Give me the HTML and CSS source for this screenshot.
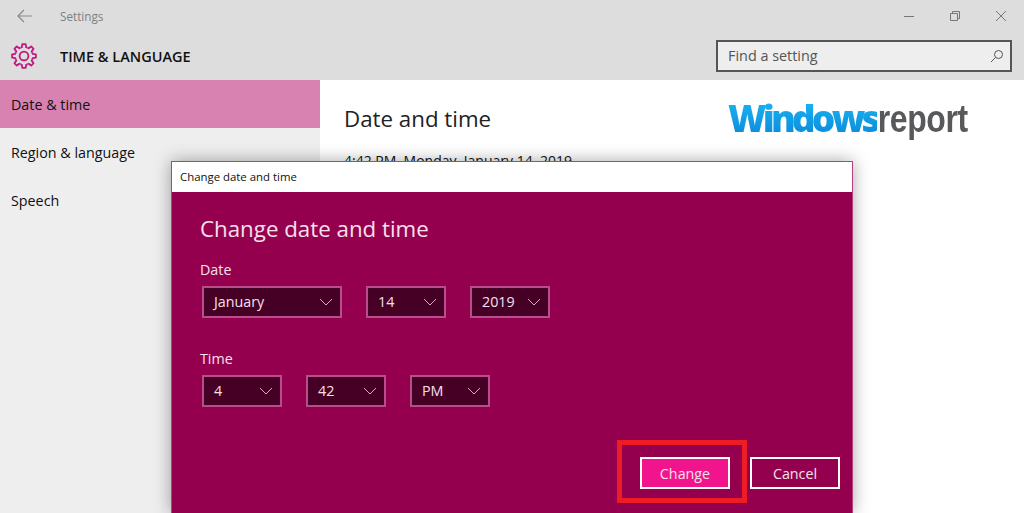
FILE: index.html
```html
<!DOCTYPE html>
<html lang="en">
<head>
<meta charset="utf-8">
<title>Settings</title>
<link rel="stylesheet" href="styles.css">
</head>
<body>
<div class="window">
  <header class="header">
    <div class="titlebar">
      <svg class="back" width="16" height="14" viewBox="0 0 16 14"><path d="M7 1 1 7l6 6M1 7h14" fill="none" stroke="#8a8a8a" stroke-width="1.2"/></svg>
      <span class="app-name">Settings</span>
      <div class="controls">
        <svg width="12" height="12" viewBox="0 0 12 12"><path d="M1 6.500h10" stroke="#777" fill="none"/></svg>
        <svg width="12" height="12" viewBox="0 0 12 12"><path d="M1.500 3.500h7v7h-7zM3.500 3.500v-2h7v7h-2" stroke="#777" fill="none"/></svg>
        <svg width="12" height="12" viewBox="0 0 12 12"><path d="M1 1l10 10M11 1 1 11" stroke="#777" fill="none"/></svg>
      </div>
    </div>
    <div class="pagebar">
      <svg class="gear" width="26" height="26" viewBox="-13 -13 26 26">
        <defs><path id="tooth" d="M-3.440-8.310-2.180-8.730-1.670-11.880 1.670-11.880 2.180-8.730 3.440-8.310"/></defs>
        <g fill="none" stroke="#c2177f" stroke-width="1.800" stroke-linejoin="round">
          <circle r="4.400"/>
          <use href="#tooth"/>
          <use href="#tooth" transform="rotate(45)"/>
          <use href="#tooth" transform="rotate(90)"/>
          <use href="#tooth" transform="rotate(135)"/>
          <use href="#tooth" transform="rotate(180)"/>
          <use href="#tooth" transform="rotate(225)"/>
          <use href="#tooth" transform="rotate(270)"/>
          <use href="#tooth" transform="rotate(315)"/>
        </g>
      </svg>
      <span class="page-title">TIME &amp; LANGUAGE</span>
      <div class="search">
        <span>Find a setting</span>
        <svg width="14" height="14" viewBox="0 0 14 14"><circle cx="8.500" cy="5.500" r="4" fill="none" stroke="#555"/><path d="M5.500 8.500 1 13" stroke="#555" fill="none"/></svg>
      </div>
    </div>
  </header>
  <div class="main">
    <nav class="sidebar">
      <div class="nav-item active">Date &amp; time</div>
      <div class="nav-item">Region &amp; language</div>
      <div class="nav-item">Speech</div>
    </nav>
    <section class="content">
      <h1>Date and time</h1>
      <p>4:42 PM, Monday, January 14, 2019</p>
    </section>
  </div>
</div>

<div class="logo"><span class="logo-win">Windows</span><span class="logo-rep">report</span></div>

<div class="dialog">
  <div class="dialog-title">Change date and time</div>
  <div class="dialog-body">
    <h2>Change date and time</h2>
    <div class="label">Date</div>
    <div class="row">
      <div class="select w140"><span>January</span><svg width="14" height="8" viewBox="0 0 14 8"><path d="M1 1l6 6 6-6" fill="none" stroke="#d9a8c2"/></svg></div>
      <div class="select"><span>14</span><svg width="14" height="8" viewBox="0 0 14 8"><path d="M1 1l6 6 6-6" fill="none" stroke="#d9a8c2"/></svg></div>
      <div class="select"><span>2019</span><svg width="14" height="8" viewBox="0 0 14 8"><path d="M1 1l6 6 6-6" fill="none" stroke="#d9a8c2"/></svg></div>
    </div>
    <div class="label time-label">Time</div>
    <div class="row">
      <div class="select"><span>4</span><svg width="14" height="8" viewBox="0 0 14 8"><path d="M1 1l6 6 6-6" fill="none" stroke="#d9a8c2"/></svg></div>
      <div class="select"><span>42</span><svg width="14" height="8" viewBox="0 0 14 8"><path d="M1 1l6 6 6-6" fill="none" stroke="#d9a8c2"/></svg></div>
      <div class="select"><span>PM</span><svg width="14" height="8" viewBox="0 0 14 8"><path d="M1 1l6 6 6-6" fill="none" stroke="#d9a8c2"/></svg></div>
    </div>
    <div class="actions">
      <div class="btn primary">Change</div>
      <div class="btn">Cancel</div>
    </div>
  </div>
</div>
<div class="highlight"></div>
</body>
</html>
```
FILE: styles.css
```css
* { box-sizing: border-box; }
html, body { margin: 0; height: 513px; overflow: hidden; }
body { position: relative; font-family: "Open Sans", "Noto Sans", sans-serif; background: #fff; color: #111; }
.window { height: 513px; display: flex; flex-direction: column; }
.header { height: 80px; background: #ddd; flex: none; }
.titlebar { height: 32px; display: flex; align-items: center; padding-left: 17px; }
.back { margin-right: 27px; }
.app-name { font-size: 11.700px; color: #808080; }
.controls { margin-left: auto; display: flex; gap: 34px; padding-right: 17px; }
.pagebar { height: 48px; display: flex; align-items: center; padding-left: 11px; }
.gear { margin-right: 23px; }
.page-title { font-size: 14.500px; font-weight: 600; color: #111; }
.search { margin-left: auto; margin-right: 12px; width: 296px; height: 32px; border: 2px solid #555; background: #eee; display: flex; align-items: center; justify-content: space-between; padding: 0 6px 2px 10px; font-size: 14.400px; color: #555; }
.search svg { margin-top: 2px; }
.main { flex: 1; display: flex; }
.sidebar { width: 320px; background: #eee; }
.nav-item { height: 48px; display: flex; align-items: center; padding-left: 11px; font-size: 14.300px; }
.nav-item.active { background: #d882b1; }
.content { flex: 1; padding: 22px 24px; }
.content h1 { margin: 0; font-size: 22.300px; font-weight: 400; line-height: 34px; color: #222; }
.content p { margin: 15px 0 0; font-size: 14px; line-height: 20px; }
.logo { position: absolute; left: 728px; top: 96px; display: flex; align-items: baseline; line-height: 44px; white-space: nowrap; }
.logo-win { font-size: 37px; font-weight: 800; letter-spacing: -3.800px; background: linear-gradient(#1cb8f5, #0a86d8); -webkit-background-clip: text; background-clip: text; color: transparent; }
.logo-rep { font-size: 39px; font-weight: 700; font-family: "Liberation Sans", sans-serif; letter-spacing: -.5px; color: #58595b; padding-left: 1px; transform: scaleX(.82); transform-origin: left center; }
.dialog { position: absolute; left: 171px; top: 161px; width: 682px; height: 352px; border: 1px solid #b93f81; border-bottom: 0; box-shadow: 0 0 16px rgba(0,0,0,.35); background: #95004e; }
.dialog-title { height: 30px; background: #fff; font-size: 11.400px; line-height: 30px; padding-left: 8px; color: #111; }
.dialog-body { padding: 20px 12px 0 28px; color: #fff; height: 321px; display: flex; flex-direction: column; }
.dialog-body h2 { margin: 0; font-size: 22.300px; font-weight: 400; line-height: 34px; color: #f5e0ec; }
.label { font-size: 14.300px; line-height: 20px; margin-top: 14px; color: #f5e0ec; }
.time-label { margin-top: 31px; }
.row { display: flex; gap: 24px; margin-top: 6px; padding-left: 2px; }
.select { width: 80px; height: 32px; border: 2px solid #b64e8c; background: #460025; display: flex; align-items: center; justify-content: space-between; padding: 0 7px 1px 10px; font-size: 14.300px; color: #f5e0ec; }
.select svg { margin-top: 1px; }
.w140 { width: 140px; }
.actions { margin-top: auto; margin-bottom: 24px; display: flex; justify-content: flex-end; gap: 20px; }
.btn { width: 90px; height: 32px; border: 2px solid #fff; display: flex; align-items: center; justify-content: center; font-size: 14.300px; color: #f5e0ec; }
.primary { background: #f2148c; }
.highlight { position: absolute; left: 617px; top: 440px; width: 130px; height: 63px; border: 5px solid #ee1c25; }
```
